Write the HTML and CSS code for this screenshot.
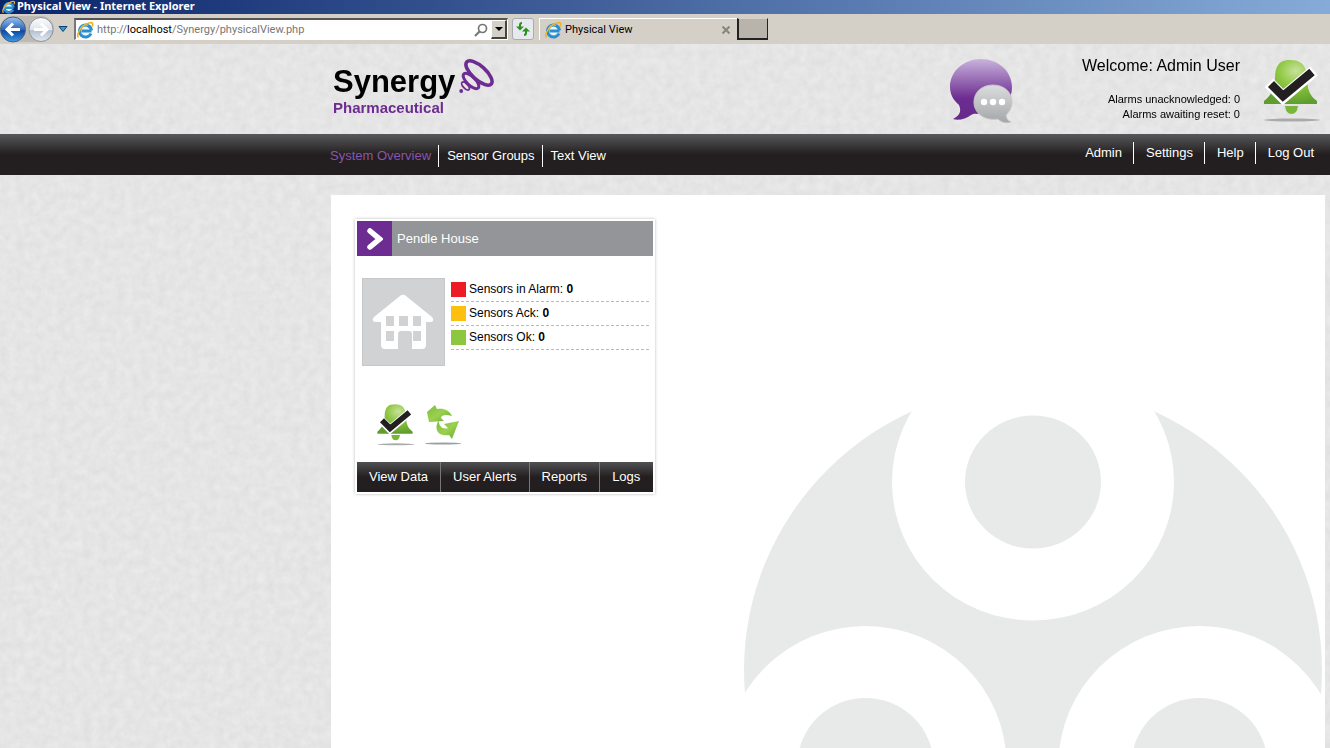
FILE: index.html
```html
<!DOCTYPE html>
<html lang="en">
<head>
<meta charset="utf-8">
<title>Physical View</title>
<link rel="stylesheet" href="styles.css">
</head>
<body>
<svg class="defs" aria-hidden="true">
  <defs>
    <linearGradient id="purple" x1="0" y1="0" x2="0" y2="1"><stop offset="0" stop-color="#c9b3dc"/><stop offset=".65" stop-color="#6c2c91"/><stop offset="1" stop-color="#662a8a"/></linearGradient>
    <linearGradient id="silver" x1="0" y1="0" x2="0" y2="1"><stop offset="0" stop-color="#dcddde"/><stop offset="1" stop-color="#a3a5a8"/></linearGradient>
    <linearGradient id="blue" x1="0" y1="0" x2="0" y2="1"><stop offset="0" stop-color="#9cc3ee"/><stop offset=".5" stop-color="#2c66b8"/><stop offset=".55" stop-color="#0d479f"/><stop offset="1" stop-color="#3f9be6"/></linearGradient>
    <linearGradient id="pale" x1="0" y1="0" x2="0" y2="1"><stop offset="0" stop-color="#fdfdfe"/><stop offset=".5" stop-color="#dfe4ec"/><stop offset=".55" stop-color="#b4bfd0"/><stop offset="1" stop-color="#e2eaf4"/></linearGradient>
    <radialGradient id="green" cx=".6" cy=".25" r=".75"><stop offset="0" stop-color="#c8e29b"/><stop offset=".45" stop-color="#8dc63f"/><stop offset="1" stop-color="#5f9e2e"/></radialGradient>
    <linearGradient id="leaf" x1="0" y1="0" x2="1" y2="1"><stop offset="0" stop-color="#7cbc3c"/><stop offset=".5" stop-color="#9bd04f"/><stop offset="1" stop-color="#6aab33"/></linearGradient>
    <symbol id="ie" viewBox="0 0 18 18">
      <circle cx="9.500" cy="9.500" r="4.500" fill="#e8f5fc"/>
      <path d="M15.500 10H5.500M15 12.500A6 6 0 1 1 15.500 9.500" fill="none" stroke="#2a8fd0" stroke-width="3"/>
      <path d="M4 9A5.600 5.600 0 0 1 12 4.400" fill="none" stroke="#7fcbf4" stroke-width="1"/>
      <path d="M2.500 16.500C-.500 13.500 6 4 13 2C17 .800 17.500 3 16 5.500" fill="none" stroke="#f0b323" stroke-width="1.600"/>
    </symbol>
    <symbol id="bell" viewBox="0 0 60 66">
      <ellipse cx="30" cy="62" rx="28" ry="1.500" fill="#aaa"/>
      <path d="M23 48h13q-1 8-6.500 8T23 48z" fill="#7ab63c"/>
      <path d="M2 46V43C9 38 12 31 13 20C13 6 19 2 28 2C38 2 44 6 45 18C45 32 48 38 55 43V46z" fill="url(#green)"/>
      <path d="M7 25L21 39L52 13" fill="none" stroke="#fff" stroke-width="12"/>
      <path d="M9 26L21 38L50 14" fill="none" stroke="#231f20" stroke-width="8.500"/>
    </symbol>
  </defs>
</svg>
<svg class="texture" aria-hidden="true">
  <filter id="paper" x="0" y="0" width="100%" height="100%" color-interpolation-filters="sRGB">
    <feTurbulence type="fractalNoise" baseFrequency="0.12" numOctaves="3" seed="4"/>
    <feColorMatrix values="0.06 0 0 0 0.868  0.06 0 0 0 0.868  0.06 0 0 0 0.868  0 0 0 0 1"/>
  </filter>
  <rect width="100%" height="100%" filter="url(#paper)"/>
</svg>

<div class="titlebar">
  <svg class="ie"><use href="#ie"/></svg>
  <span>Physical View - Internet Explorer</span>
</div>
<div class="toolbar">
  <button class="plain" aria-label="Back and forward">
    <svg class="arrows" viewBox="0 0 54 28">
      <rect x="0" y="1" width="54" height="26" rx="13" fill="#bdbab4"/>
      <circle cx="13" cy="14.500" r="12.500" fill="url(#blue)" stroke="#4a5e80"/>
      <circle cx="41" cy="14.500" r="12" fill="url(#pale)" stroke="#8e939c"/>
      <path d="M20 14.500H8M13 8.500L7 14.500L13 20.500M34 14.500H46M41 8.500L47 14.500L41 20.500" fill="none" stroke="#fff" stroke-width="3"/>
    </svg>
  </button>
  <button class="plain history" aria-label="Recent pages"><svg viewBox="0 0 10 6"><path d="M1 .500H9L5 5.500z" fill="#2ba0d8" stroke="#123f72"/></svg></button>
  <div class="address">
    <svg class="ie"><use href="#ie"/></svg>
    <a class="url" href="#">http://<b>localhost</b>/Synergy/physicalView.php</a>
    <button class="plain" aria-label="Search"><svg class="lens" viewBox="0 0 14 14"><circle cx="8.500" cy="5.500" r="4" fill="none" stroke="#777" stroke-width="1.700"/><path d="M5.500 8.500L1 13" stroke="#777" stroke-width="2.200"/></svg></button>
    <button class="drop" aria-label="Show addresses"><svg viewBox="0 0 8 4"><path d="M0 0H8L4 4z"/></svg></button>
  </div>
  <button class="refresh" aria-label="Refresh"><svg viewBox="0 0 16 14"><path d="M7 1Q5 1 5 3V6M9 13Q11 13 11 11V8" fill="none" stroke="#2c9020" stroke-width="2"/><path d="M1 4.500H9L5 8.500zM7 9.500H15L11 5.500z" fill="#2c9020"/></svg></button>
  <div class="tab">
    <svg class="ie"><use href="#ie"/></svg>
    <span>Physical View</span>
    <button class="plain" aria-label="Close tab"><svg class="close" viewBox="0 0 8 8"><path d="M.500 .500L7.500 7.500M7.500 .500L.500 7.500" stroke="#888580" stroke-width="2"/></svg></button>
  </div>
  <button class="newtab" aria-label="New tab"></button>
</div>

<header class="header">
  <div class="logo">
    <div class="wordmark"><span class="name">Synergy</span><span class="sub">Pharmaceutical</span></div>
    <svg class="rings" viewBox="0 0 36 36" fill="none" stroke="#6c2c91">
      <ellipse cx="20" cy="14" rx="16.500" ry="6.800" transform="rotate(42 20 14)" stroke-width="3.600"/>
      <ellipse cx="12" cy="22" rx="10" ry="4.300" transform="rotate(44 12 22)" stroke-width="3"/>
      <ellipse cx="6.500" cy="27" rx="5" ry="2.300" transform="rotate(46 6.500 27)" stroke-width="1.800"/>
      <circle cx="2.200" cy="32" r="1.900" fill="#6c2c91" stroke="none"/>
    </svg>
  </div>
  <svg class="chat" viewBox="0 0 64 66">
    <path d="M31 1C48 1 62 13 62 29C62 46 48 57 33 56C26 56 24 55 21 57C16 61 8 63 3 61C9 58 12 54 9 47C3 42 0 36 0 29C0 13 14 1 31 1z" fill="url(#purple)"/>
    <path d="M43 27C54 27 62 34 62 44C62 50 59 54 56 57C56 61 59 63 61 64C56 66 51 64 48 61C34 63 24 55 24 44C24 34 32 27 43 27z" fill="url(#silver)" stroke="#c5c6c8"/>
    <g fill="#fff"><circle cx="34" cy="44" r="3.200"/><circle cx="43" cy="44" r="3.200"/><circle cx="52" cy="44" r="3.200"/></g>
  </svg>
  <div class="welcome">
    <p class="user">Welcome: Admin User</p>
    <p>Alarms unacknowledged: 0</p>
    <p>Alarms awaiting reset: 0</p>
  </div>
  <svg class="alarm"><use href="#bell"/></svg>
</header>

<div class="navbar">
  <nav class="views"><a class="active" href="#">System Overview</a><a href="#">Sensor Groups</a><a href="#">Text View</a></nav>
  <nav class="account"><a href="#">Admin</a><a href="#">Settings</a><a href="#">Help</a><a href="#">Log Out</a></nav>
</div>

<main class="panel">
  <svg class="emblem" viewBox="0 0 578 570" aria-hidden="true">
    <ellipse cx="289" cy="285" rx="289" ry="285" fill="#e8eae9"/>
    <g fill="#fff"><ellipse cx="289" cy="97" rx="141" ry="138.500"/><ellipse cx="121.500" cy="380" rx="141" ry="139"/><ellipse cx="455.500" cy="380" rx="141" ry="139"/><rect x="168" y="-20" width="242" height="46"/></g>
    <g fill="#e8eae9"><ellipse cx="289" cy="97" rx="68" ry="66.500"/><ellipse cx="121.500" cy="380" rx="68" ry="67"/><ellipse cx="455.500" cy="380" rx="68" ry="67"/></g>
  </svg>
  <section class="card">
    <h2><span class="go"><svg viewBox="0 0 16 22"><path d="M3 3L12.500 11L3 19" fill="none" stroke="#fff" stroke-width="5.500" stroke-linecap="round"/></svg></span>Pendle House</h2>
    <div class="body">
      <div class="house">
        <svg viewBox="0 0 62 56"><path d="M31 1Q32 0 34 2L60 23Q63 27 59 28H54V51Q54 55 50 55H40V40Q40 37 37 37H29Q26 37 26 40V55H13Q9 55 9 51V28H3Q-1 27 2 23L28 2Q30 0 31 1z" fill="#fff"/><path d="M14 22h8v10h-8zM27 22h9v10h-9zM41 22h8v10h-8zM14 37h8v10h-8zM41 37h8v10h-8z" fill="#d1d2d4"/></svg>
      </div>
      <ul class="sensors">
        <li><i class="red"></i><span>Sensors in Alarm: <b>0</b></span></li>
        <li><i class="amber"></i><span>Sensors Ack: <b>0</b></span></li>
        <li><i class="ok"></i><span>Sensors Ok: <b>0</b></span></li>
      </ul>
    </div>
    <div class="actions">
      <button class="plain" aria-label="Acknowledge alarms"><svg class="small-bell"><use href="#bell"/></svg></button>
      <button class="plain" aria-label="Reset alarms"><svg class="swap" viewBox="0 0 36 42">
        <ellipse cx="18" cy="39.500" rx="18" ry="1" fill="#9aa0a5"/>
        <path d="M10 1L12 5C19 4 24 6 27 12C21 10 16 11 16 14L19 17L4 18L2 8z" fill="url(#leaf)"/>
        <path d="M14 16C10 22 11 27 15 30Q19 32 24 31L27 35L34 17L19 20L23 24C18 26 13 22 14 16z" fill="url(#leaf)"/>
      </svg></button>
    </div>
    <nav class="links"><a href="#">View Data</a><a href="#">User Alerts</a><a href="#">Reports</a><a href="#">Logs</a></nav>
  </section>
</main>
</body>
</html>
```
FILE: styles.css
```css
* { box-sizing: border-box; }
body {
  margin: 0;
  min-height: 100vh;
  display: flex;
  flex-direction: column;
  background: #e5e5e5;
  font: 13px/16px "Liberation Sans", Arial, sans-serif;
  color: #000;
}
p, h2, ul { margin: 0; padding: 0; }
a { color: inherit; text-decoration: none; }
svg { display: block; flex: none; }
button { font: inherit; padding: 0; }
.plain { border: 0; background: none; }
.defs { position: absolute; width: 0; height: 0; }
.texture { position: fixed; z-index: -1; inset: 0; width: 100%; height: 100%; }
.ie { width: 18px; height: 18px; }

.titlebar {
  height: 14px;
  display: flex;
  align-items: flex-start;
  background: linear-gradient(90deg, #0a246a, #86abd8);
  color: #fff;
  font: bold 11px/11px "Noto Sans", sans-serif;
}
.titlebar .ie { width: 17px; height: 14px; }

.toolbar {
  height: 30px;
  display: flex;
  align-items: center;
  background: #d4d0c8;
  font: 11px/16px Roboto, sans-serif;
}
.arrows { width: 54px; height: 28px; }
.history { margin: 0 6px 0 4px; }
.history svg { width: 10px; height: 6px; }
.address {
  flex: 0 1 434px;
  height: 22px;
  display: flex;
  align-items: center;
  gap: 3px;
  background: #fff;
  border: 1px solid #fff;
  border-top: 2px solid #555;
  border-left: 2px solid #777;
}
.url { flex: 1; color: #777; }
.url b { font-weight: normal; color: #000; }
.lens { width: 14px; height: 14px; }
.drop {
  width: 16px;
  height: 19px;
  display: grid;
  place-items: center;
  background: #d4d0c8;
  border: 1px solid #fff;
  border-right: 2px solid #444;
  border-bottom: 2px solid #444;
}
.drop svg { width: 8px; height: 4px; }
.refresh {
  width: 22px;
  height: 22px;
  margin: 0 5px 0 4px;
  display: grid;
  place-items: center;
  background: #e6eaee;
  border: 1px solid #a8abb0;
  border-radius: 3px;
}
.refresh svg { width: 16px; height: 14px; }
.tab {
  flex: 0 1 198px;
  height: 22px;
  display: flex;
  align-items: center;
  gap: 3px;
  padding: 0 7px 0 4px;
  border-top: 1px solid #fff;
  border-left: 1px solid #fff;
}
.tab span { flex: 1; }
.close { width: 8px; height: 8px; }
.newtab {
  width: 31px;
  height: 22px;
  background: #b8b4ac;
  border: 1px solid #222;
  border-top-color: #d4d0c8;
  border-bottom-width: 2px;
  border-left-width: 2px;
}

.header {
  height: 90px;
  display: flex;
  align-items: flex-start;
  padding: 14px 8px 0 333px;
}
.logo { flex: 1; display: flex; gap: 4px; }
.wordmark { display: flex; flex-direction: column; font-weight: bold; padding-top: 6px; }
.name { font-size: 31px; line-height: 36px; }
.sub { font-size: 15px; line-height: 16px; color: #6c2c91; }
.rings { width: 36px; height: 36px; margin-top: 1px; }
.chat { width: 64px; height: 66px; }
.welcome { width: 226px; text-align: right; font-size: 11px; line-height: 15px; }
.user { font-size: 16px; line-height: 16px; margin-bottom: 18px; }
.alarm { width: 60px; height: 66px; margin-left: 22px; }

.navbar {
  height: 41px;
  display: flex;
  justify-content: space-between;
  align-items: flex-start;
  padding: 8px 16px 0 330px;
  background: linear-gradient(#58585a, #231f20 50%);
  color: #fff;
}
.navbar nav { display: flex; }
.navbar a { line-height: 22px; }
.views { padding-top: 3px; }
.views a { padding: 0 7px 0 8px; border-left: 1px solid #fff; }
.views .active { color: #8a55ac; padding-left: 0; border: 0; }
.account a { padding: 0 11px 0 12px; border-left: 1px solid #fff; }
.account a:first-child { border: 0; }
.account a:last-child { padding-right: 0; }

.panel {
  position: relative;
  flex: 1;
  margin: 20px 5px 0 331px;
  padding: 24px;
  background: #fff;
  overflow: hidden;
}
.emblem { position: absolute; top: 190px; right: 3px; width: 578px; height: 570px; }
.card {
  position: relative;
  width: 300px;
  padding: 2px;
  background: #fff;
  box-shadow: 0 0 3px #bbb;
}
.card h2 {
  display: flex;
  align-items: center;
  gap: 5px;
  background: #939598;
  color: #fff;
  font-size: 13px;
  font-weight: normal;
}
.go { width: 35px; height: 35px; display: grid; place-items: center; background: #6c2c91; }
.go svg { width: 16px; height: 22px; }
.body { display: flex; gap: 6px; padding: 22px 4px 0 5px; }
.house {
  width: 83px;
  height: 88px;
  display: grid;
  place-items: center start;
  padding-left: 9px;
  background: #d1d2d4;
  border: 1px solid #c6c7c9;
}
.house svg { width: 62px; height: 56px; }
.sensors { flex: 1; list-style: none; font-size: 12px; }
.sensors li {
  height: 24px;
  display: flex;
  align-items: center;
  gap: 3px;
  border-bottom: 1px dashed #bbb;
}
.sensors span { padding-bottom: 2px; }
.sensors i { width: 15px; height: 15px; }
.red { background: #ed1c24; }
.amber { background: #fdc010; }
.ok { background: #8dc63f; }
.actions { display: flex; gap: 9px; padding: 36px 0 14px 19px; }
.small-bell { width: 40px; height: 46px; }
.swap { width: 36px; height: 42px; }
.links { display: flex; background: linear-gradient(#505052, #231f20 50%); color: #fff; }
.links a { padding: 0 12px; line-height: 30px; border-left: 1px solid #777; white-space: nowrap; }
.links a:first-child { border: 0; }
```
